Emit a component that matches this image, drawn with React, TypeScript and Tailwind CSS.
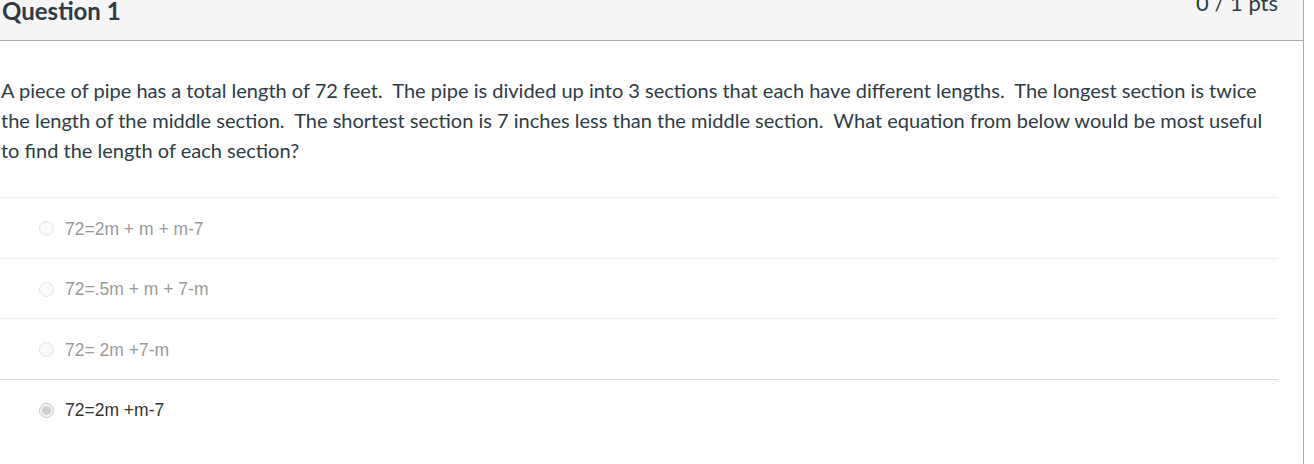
const answers = [
  { text: "72=2m + m + m-7", selected: false },
  { text: "72=.5m + m + 7-m", selected: false },
  { text: "72= 2m +7-m", selected: false },
  { text: "72=2m +m-7", selected: true },
];

function Radio({ selected }: { selected: boolean }) {
  if (selected) {
    return (
      <span className="flex h-[15px] w-[15px] shrink-0 items-center justify-center rounded-full border border-[#c8c8c8] bg-[#f4f4f4]">
        <span className="h-[9px] w-[9px] rounded-full bg-[#cfcfcf]" />
      </span>
    );
  }
  return <span className="h-[15px] w-[15px] shrink-0 rounded-full border border-[#e3e3e3] bg-[#fafafa]" />;
}

export default function App() {
  return (
    <div className="h-[464px] w-[1304px] overflow-hidden border-r border-[#aaaaaa] bg-white font-['Lato','Noto_Sans',sans-serif] text-[#2d3b45]">
      {/* Header */}
      <div className="flex h-[41px] items-start justify-between overflow-hidden border-b border-[#aaaaaa] bg-[#f5f5f5] pl-[2px] pr-[25px]">
        <h2 className="mt-[-1px] text-[24px] font-bold leading-[24px]">Question 1</h2>
        <span className="mt-[-8px] text-[22px] leading-[22px]">0 / 1 pts</span>
      </div>

      {/* Body */}
      <div className="w-[1278px] pt-[34px]">
        <p className="pl-[1px] text-[20px] leading-[30px]">
          A piece of pipe has a total length of 72 feet.&nbsp; The pipe is divided up into 3 sections that each have
          different lengths.&nbsp; The longest section is twice the length of the middle section.&nbsp; The shortest
          section is 7 inches less than the middle section.&nbsp; What equation from below would be most useful to find
          the length of each section?
        </p>

        <div className="mt-[32px]">
          {answers.map((a, i) => (
            <div
              key={a.text}
              className={`flex h-[60.5px] items-center gap-[11px] border-t pl-[39px] pt-[2px] ${
                i === answers.length - 1 ? "border-[#d9d9d9]" : "border-[#ececec]"
              }`}
            >
              <Radio selected={a.selected} />
              <span
                className={`font-['Liberation_Sans',Arial,sans-serif] text-[17.5px] ${
                  a.selected ? "text-[#333333]" : "text-[#9a9a9a]"
                }`}
              >
                {a.text}
              </span>
            </div>
          ))}
        </div>
      </div>
    </div>
  );
}
